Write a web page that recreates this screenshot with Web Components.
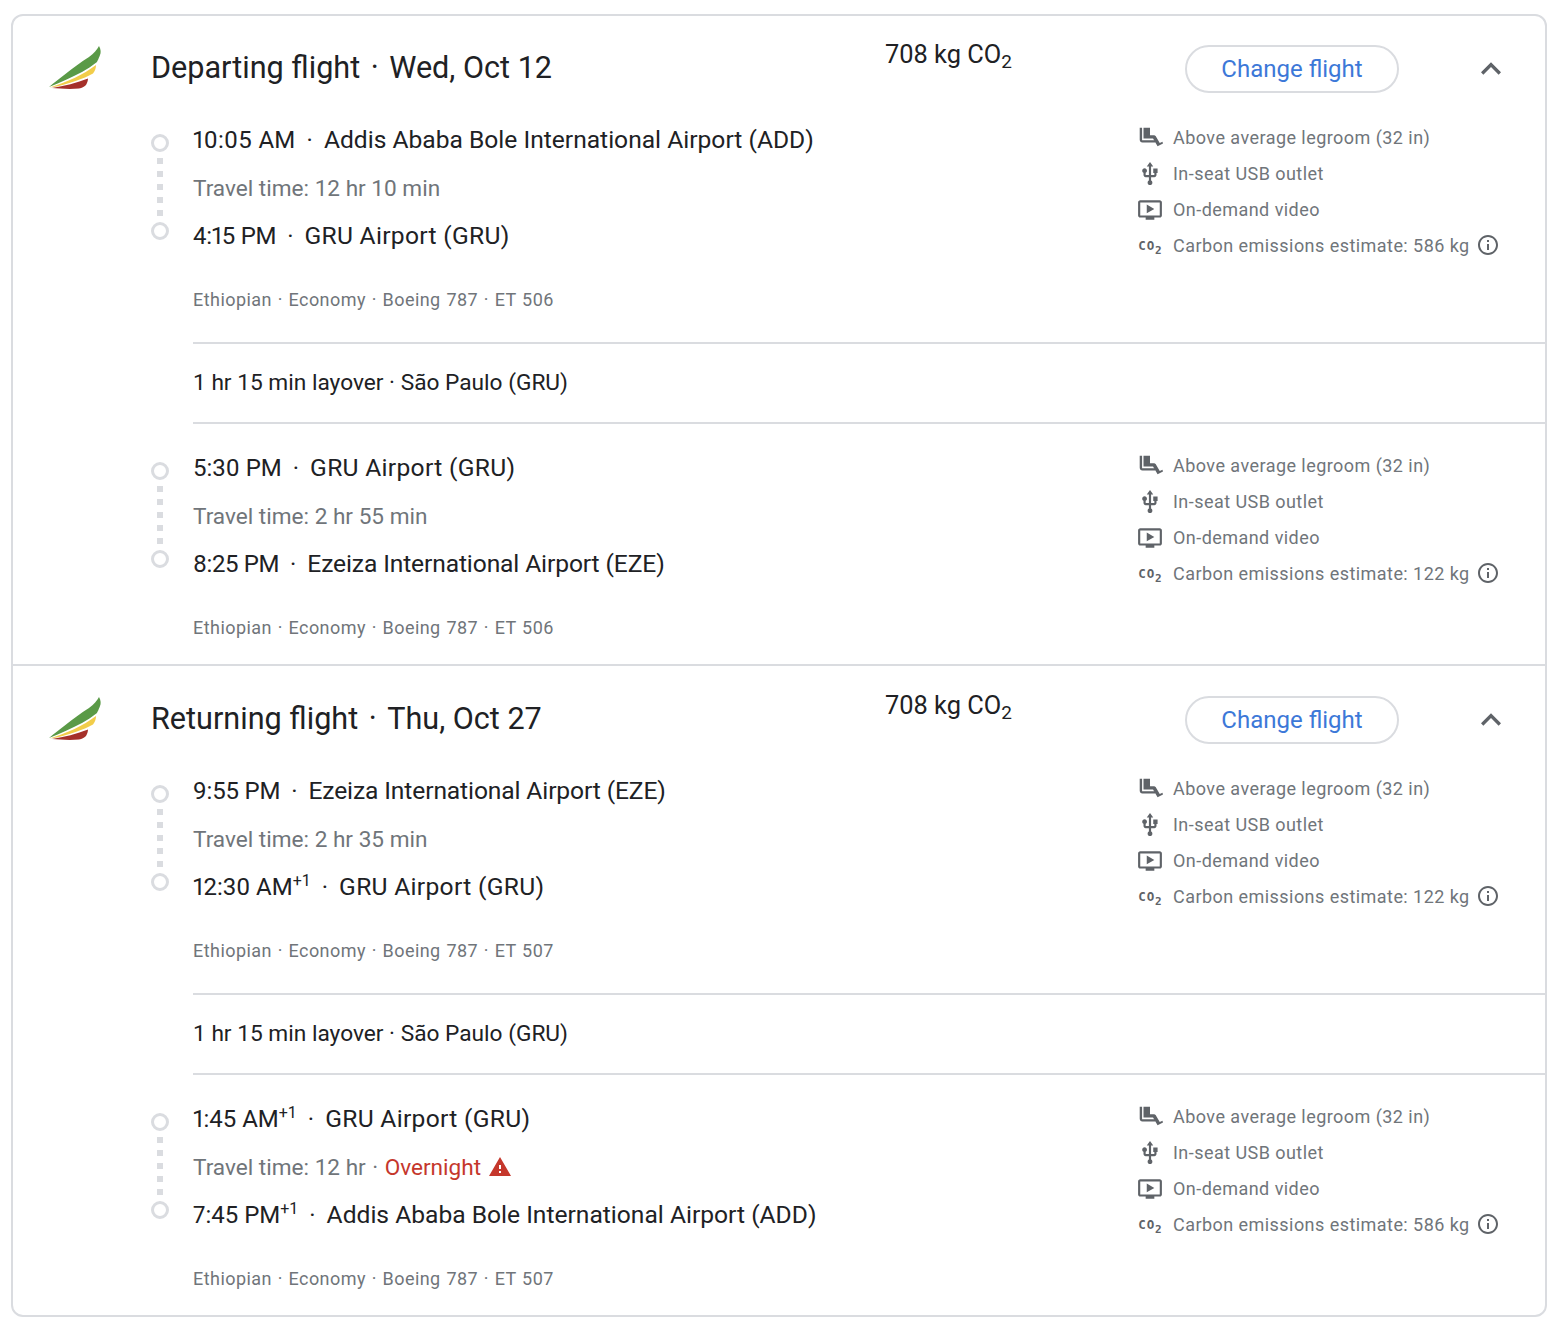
<!DOCTYPE html>
<html>
<head>
<meta charset="utf-8">
<style>
  html, body { margin: 0; background: #fff; }
  body { padding: 14px 11px 13px 11px; font-family: Roboto, "Liberation Sans", sans-serif; color: #202124; }
</style>
</head>
<body>
<flight-card>
  <flight-section title-text="Departing flight" date="Wed, Oct 12">
    <flight-leg dep="10:05 AM" dep-place="Addis Ababa Bole International Airport (ADD)" travel="Travel time: 12 hr 10 min" arr="4:15 PM" arr-place="GRU Airport (GRU)" carrier="ET 506" co2="586 kg"></flight-leg>
    <flight-layover>1 hr 15 min layover · São Paulo (GRU)</flight-layover>
    <flight-leg class="last" dep="5:30 PM" dep-place="GRU Airport (GRU)" travel="Travel time: 2 hr 55 min" arr="8:25 PM" arr-place="Ezeiza International Airport (EZE)" carrier="ET 506" co2="122 kg"></flight-leg>
  </flight-section>
  <flight-section title-text="Returning flight" date="Thu, Oct 27" divided>
    <flight-leg dep="9:55 PM" dep-place="Ezeiza International Airport (EZE)" travel="Travel time: 2 hr 35 min" arr="12:30 AM" arr-next="+1" arr-place="GRU Airport (GRU)" carrier="ET 507" co2="122 kg"></flight-leg>
    <flight-layover>1 hr 15 min layover · São Paulo (GRU)</flight-layover>
    <flight-leg class="last" dep="1:45 AM" dep-next="+1" dep-place="GRU Airport (GRU)" travel="Travel time: 12 hr" overnight arr="7:45 PM" arr-next="+1" arr-place="Addis Ababa Bole International Airport (ADD)" carrier="ET 507" co2="586 kg"></flight-leg>
  </flight-section>
</flight-card>

<script>
class FlightCard extends HTMLElement {
    constructor() {
        super();
        this.attachShadow({mode: 'open'}).innerHTML = `
            <style>
                :host { display: block; border: 2px solid #dadce0; border-radius: 12px; overflow: hidden; }
            </style>
            <slot></slot>
        `;
    }
}

class FlightSection extends HTMLElement {
    constructor() {
        super();
        this.attachShadow({mode: 'open'});
    }

    connectedCallback() {
        this.shadowRoot.innerHTML = `
            <style>
                :host { display: block; }
                :host([divided]) { border-top: 2px solid #dadce0; padding-top: 1px; }
                header { display: grid; grid-template-columns: 138px 734px 300px 1fr; height: 80px; }
                .logo { margin: 29px 0 0 34px; width: 56px; height: 48px; display: block; }
                h2 { margin: 0; padding-top: 31px; font: 400 30.6px/42px "Google Sans", Roboto, "Liberation Sans", sans-serif; white-space: nowrap; }
                h2 span { margin: 0 10.5px; }
                .co2 { padding-top: 23px; font-size: 25.4px; line-height: 30px; }
                .co2 sub { font-size: 19px; line-height: 0; vertical-align: -5px; }
                .actions { display: flex; align-items: flex-start; }
            </style>
            <header>
                <svg class="logo" viewBox="0 0 56 48">
                    <path fill="#5a9a47" d="M2 42C12 34 25 23 42 12 47 8 50 5 52 1c2 3 2 7 1 9-1 3-3 7-3 7-5 4-10 7-15 10C25 32 15 37 2 42z"/>
                    <path fill="#f2cd4a" d="M3 42.500C20 37 36 30 49 20c0 3-1 6-3 8.500-5 3-11 5-16 7-9 3-18 6-27 7z"/>
                    <path fill="#a5302a" d="M5 43C17 41 30 38 41 33.500c0 2.500-1 4.500-2 6.500-2 2-4 3-7 3.500-10 1-20 0-27-.5z"/>
                </svg>
                <h2>${this.getAttribute('title-text')}<span>·</span>${this.getAttribute('date')}</h2>
                <div class="co2">708 kg CO<sub>2</sub></div>
                <div class="actions">
                    <change-button></change-button>
                    <collapse-chevron></collapse-chevron>
                </div>
            </header>
            <slot></slot>
        `;
    }
}

class ChangeButton extends HTMLElement {
    constructor() {
        super();
        this.attachShadow({mode: 'open'}).innerHTML = `
            <style>
                :host { display: block; margin-top: 29px; }
                button { box-sizing: border-box; width: 214px; height: 48px; padding: 0; background: #fff; border: 2px solid #dadce0; border-radius: 24px; color: #3c78d8; font: 400 24px/1 "Google Sans", Roboto, "Liberation Sans", sans-serif; }
            </style>
            <button>Change flight</button>
        `;
    }
}

class CollapseChevron extends HTMLElement {
    constructor() {
        super();
        this.attachShadow({mode: 'open'}).innerHTML = `
            <style>
                :host { display: block; margin: 33px 0 0 72px; width: 40px; height: 40px; }
                svg { display: block; fill: #5f6368; }
            </style>
            <svg width="40" height="40" viewBox="0 0 24 24"><path d="M12 8l-6 6 1.41 1.41L12 10.83l4.59 4.58L18 14z"/></svg>
        `;
    }
}

// small tracking corrections, the original face has different digit and capital widths
const TIME_TRACK = {'10:05 AM': .3, '4:15 PM': -.3, '8:25 PM': -.4, '9:55 PM': -.2};
const PLACE_TRACK = {'GRU Airport (GRU)': .3, 'Ezeiza International Airport (EZE)': -.12};

class FlightLeg extends HTMLElement {
    constructor() {
        super();
        this.attachShadow({mode: 'open'});
    }

    // one stop line of the leg, with the optional +1 day marker
    stop(time, next, place) {
        const sup = next ? `<sup>${next}</sup>` : '';
        return `<div class="row stop"><span class="time" style="letter-spacing:${TIME_TRACK[time] || 0}px">${time}</span>${sup}<span class="sep">·</span><span class="place" style="letter-spacing:${PLACE_TRACK[place] || 0}px">${place}</span></div>`;
    }

    connectedCallback() {
        const a = (name) => this.getAttribute(name);
        const warn = this.hasAttribute('overnight')
            ? `<span class="dot">·</span><span class="night">Overnight</span><svg class="warn" width="24" height="24" viewBox="0 0 24 24"><path d="M1 21h22L12 2 1 21zm12-3h-2v-2h2v2zm0-4h-2v-4h2v4z"/></svg>`
            : '';
        this.shadowRoot.innerHTML = `
            <style>
                :host { display: grid; grid-template-columns: 180px 944px 1fr; padding: 20px 0 32px; }
                :host(.last) { padding-bottom: 26px; }
                leg-timeline { margin-left: 138px; }
                .row { height: 48px; display: flex; align-items: center; white-space: nowrap; }
                .stop { font-size: 24px; color: #202124; }
                .time { font-variant-numeric: proportional-nums; }
                .place { font-size: 24.6px; margin-bottom: 2px; }
                sup { font-size: 16px; line-height: 0; align-self: flex-start; margin-top: 18px; }
                .sep { margin: 0 11px; }
                .travel { font-size: 22.6px; color: #70757a; }
                .dot { margin: 0 6.500px; }
                .night { color: #c5372c; }
                .warn { fill: #c5372c; margin-left: 7px; }
                .carrier { margin-top: 30px; height: 20px; line-height: 20px; font-size: 18px; letter-spacing: .45px; word-spacing: .8px; color: #70757a; white-space: nowrap; }
                .amenities { display: flex; flex-direction: column; margin-top: 3px; }
            </style>
            <leg-timeline></leg-timeline>
            <div>
                ${this.stop(a('dep'), a('dep-next'), a('dep-place'))}
                <div class="row travel">${a('travel')}${warn}</div>
                ${this.stop(a('arr'), a('arr-next'), a('arr-place'))}
                <div class="carrier">Ethiopian · Economy · Boeing 787 · ${a('carrier')}</div>
            </div>
            <div class="amenities">
                <leg-amenity icon="seat">Above average legroom (32 in)</leg-amenity>
                <leg-amenity icon="usb">In-seat USB outlet</leg-amenity>
                <leg-amenity icon="video">On-demand video</leg-amenity>
                <leg-amenity icon="co2" info>Carbon emissions estimate: ${a('co2')}</leg-amenity>
            </div>
        `;
    }
}

class LegTimeline extends HTMLElement {
    constructor() {
        super();
        this.attachShadow({mode: 'open'}).innerHTML = `
            <style>
                :host { display: flex; flex-direction: column; align-items: center; width: 18px; padding-top: 18px; }
                i { display: block; box-sizing: border-box; width: 18px; height: 18px; border: 3px solid #dadce0; border-radius: 50%; }
                b { display: block; width: 6px; height: 58px; margin: 6px 0; background: repeating-linear-gradient(#dadce0 0 6px, transparent 6px 13px); }
            </style>
            <i></i><b></b><i></i>
        `;
    }
}

const AMENITY_ICONS = {
    seat: '<path d="M2.500 2.500h2.200v11.500h12.300v2.200H5c-1.500 0-2.500-1-2.500-2.500z"/><path d="M6 2.500h6V9.500h4l1.200.6 3.800 6.400 2.500-1 .5 1.500-5 2.500-4.200-7H6z"/>',
    usb: '<path d="M15 7v4h1v2h-3V5h2l-3-4-3 4h2v8H8v-2.070c.7-.37 1.200-1.080 1.200-1.930 0-1.210-.99-2.200-2.200-2.200-1.210 0-2.200.99-2.200 2.200 0 .85.5 1.560 1.200 1.930V13c0 1.110.89 2 2 2h3v3.050c-.71.37-1.200 1.100-1.200 1.950 0 1.220.99 2.200 2.200 2.200 1.210 0 2.200-.98 2.200-2.200 0-.85-.49-1.580-1.200-1.950V15h3c1.110 0 2-.89 2-2v-2h1V7h-4z"/>',
    video: '<path d="M21 3H3c-1.110 0-2 .89-2 2v12c0 1.100.89 2 2 2h5v2h8v-2h5c1.100 0 1.990-.9 1.990-2L23 5c0-1.110-.9-2-2-2zm0 14H3V5h18v12zm-5-6l-7 4V7z"/>'
};

class LegAmenity extends HTMLElement {
    constructor() {
        super();
        this.attachShadow({mode: 'open'});
    }

    connectedCallback() {
        const name = this.getAttribute('icon');
        const icon = name === 'co2'
            ? '<span class="co">CO<sub>2</sub></span>'
            : `<svg width="26" height="26" viewBox="0 0 24 24">${AMENITY_ICONS[name]}</svg>`;
        const info = this.hasAttribute('info')
            ? '<svg class="info" width="24" height="24" viewBox="0 0 24 24"><path d="M11 7h2v2h-2zm0 4h2v6h-2zm1-9C6.480 2 2 6.480 2 12s4.480 10 10 10 10-4.480 10-10S17.520 2 12 2zm0 18c-4.410 0-8-3.590-8-8s3.590-8 8-8 8 3.590 8 8-3.590 8-8 8z"/></svg>'
            : '';
        this.shadowRoot.innerHTML = `
            <style>
                :host { display: flex; align-items: center; height: 36px; font-size: 18px; letter-spacing: .45px; color: #70757a; white-space: nowrap; }
                .icon { width: 26px; height: 26px; margin: 2px 10px 0 0; display: flex; align-items: center; justify-content: center; }
                svg { display: block; fill: #5f6368; }
                .co { font: 700 12.500px/1 "DejaVu Sans Mono", monospace; letter-spacing: .8px; color: #5f6368; }
                .co sub { font-size: 11px; line-height: 0; vertical-align: -4px; letter-spacing: 0; }
                .info { margin-left: 6px; }
            </style>
            <span class="icon">${icon}</span><span><slot></slot></span>${info}
        `;
    }
}

class FlightLayover extends HTMLElement {
    constructor() {
        super();
        this.attachShadow({mode: 'open'}).innerHTML = `
            <style>
                :host { display: flex; align-items: center; box-sizing: border-box; height: 82px; margin-left: 180px; padding-bottom: 1px; border-top: 2px solid #dadce0; border-bottom: 2px solid #dadce0; font-size: 22.7px; color: #202124; }
            </style>
            <slot></slot>
        `;
    }
}

customElements.define('flight-card', FlightCard);
customElements.define('flight-section', FlightSection);
customElements.define('change-button', ChangeButton);
customElements.define('collapse-chevron', CollapseChevron);
customElements.define('flight-leg', FlightLeg);
customElements.define('leg-timeline', LegTimeline);
customElements.define('leg-amenity', LegAmenity);
customElements.define('flight-layover', FlightLayover);
</script>
</body>
</html>
